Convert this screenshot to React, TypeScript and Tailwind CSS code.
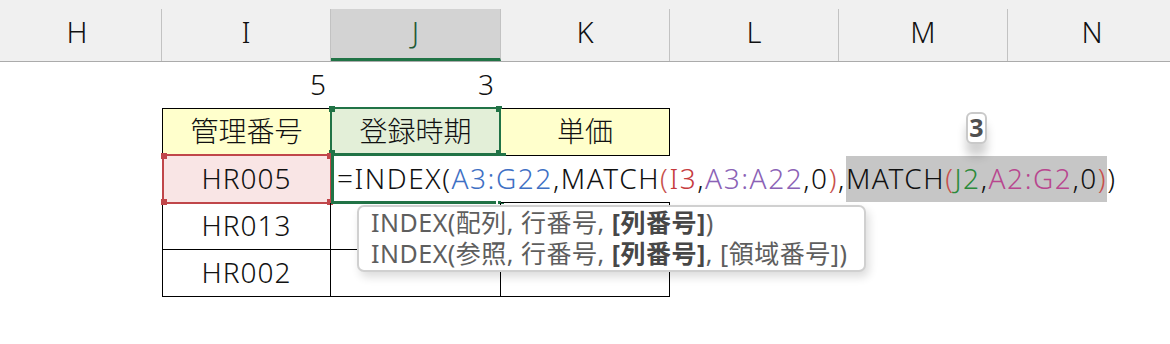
import { ReactNode } from 'react';

const headers = [
  { label: 'H', w: 'w-[169px]' },
  { label: 'I', w: 'w-[169px]' },
  { label: 'J', w: 'w-[170px]' },
  { label: 'K', w: 'w-[169px]' },
  { label: 'L', w: 'w-[169px]' },
  { label: 'M', w: 'w-[169px]' },
  { label: 'N', w: 'w-[169px]' },
];

function ColumnHeaders() {
  return (
    <div className="flex h-[62px] -ml-[7px] border-b border-[#ababab] bg-[#f0f0f0] text-[29px]">
      {headers.map(h => (
        <div key={h.label} className={`${h.w} shrink-0 h-full pt-[9px]`}>
          <div
            className={
              h.label === 'J'
                ? 'h-full flex items-center justify-center pb-[3px] border-r border-[#c2c2c2] bg-[#d3d3d3] text-[#1f5a37] border-b-[3px] border-b-[#217346]'
                : 'h-full flex items-center justify-center pb-[6px] border-r border-[#c2c2c2]'
            }
          >
            {h.label}
          </div>
        </div>
      ))}
    </div>
  );
}

function Handles({ color }: { color: string }) {
  return (
    <>
      <span className={`absolute -left-[3px] -top-[3px] w-[6px] h-[6px] ${color}`} />
      <span className={`absolute -right-[3px] -top-[3px] w-[6px] h-[6px] ${color}`} />
      <span className={`absolute -left-[3px] -bottom-[3px] w-[6px] h-[6px] ${color}`} />
      <span className={`absolute -right-[3px] -bottom-[3px] w-[6px] h-[6px] ${color}`} />
    </>
  );
}

function Cell({ children, className = '' }: { children?: ReactNode; className?: string }) {
  return (
    <div className={`relative h-[47px] pb-[3px] border-b border-black flex items-center justify-center ${className}`}>
      {children}
    </div>
  );
}

const R = 'text-[#c8504c]';

function Formula() {
  const seg = (t: string, c = '') => <span className={c}>{t}</span>;
  return (
    <div className="absolute left-[6px] top-0 h-[46px] pb-[3px] flex items-center whitespace-nowrap tracking-[1.55px] z-10">
      {seg('=INDEX(')}
      {seg('A3:G22', 'text-[#3e70c4]')}
      {seg(',MATCH')}
      {seg('(', R)}
      {seg('I3', 'text-[#c63a3e]')}
      {seg(',')}
      {seg('A3:A22', 'text-[#8b62b6]')}
      {seg(',0')}
      {seg(')', R)}
      {seg(',')}
      <span className="h-[46px] -mb-[3px] pb-[3px] flex items-center bg-[#c6c6c6]">
        {seg('MATCH')}
        {seg('(', R)}
        {seg('J2', 'text-[#2b8a3a]')}
        {seg(',')}
        {seg('A2:G2', 'text-[#b8468f]')}
        {seg(',0')}
        {seg(')', R)}
      </span>
      {seg(')')}
    </div>
  );
}

function Table() {
  return (
    <div className="ml-[162px] w-[508px] border-t border-l border-black grid grid-cols-[168px_170px_169px] text-[28px]">
      <Cell className="border-r bg-[#ffffcc]">管理番号</Cell>
      <Cell className="border-r bg-[#e3efd8]">
        登録時期
        <div className="absolute -left-px -top-[2px] -right-px bottom-0 border-2 border-[#217346]">
          <Handles color="bg-[#217346]" />
        </div>
      </Cell>
      <Cell className="border-r bg-[#ffffcc]">単価</Cell>

      <Cell className="border-r bg-[#f9e5e5] tracking-[1px]">
        HR005
        <div className="absolute -left-px -top-[2px] -right-[2px] -bottom-[2px] border-2 border-[#c0464a]">
          <Handles color="bg-[#c0464a]" />
        </div>
      </Cell>
      <Cell className="bg-white justify-start">
        <div className="absolute left-0 -top-[3px] -right-[3px] -bottom-[2px] border-l-[3px] border-t-[3px] border-b-[3px] border-[#217346]">
          <span className="absolute -right-[2px] -top-[3px] w-[5px] h-[5px] bg-[#217346]" />
          <span className="absolute right-[6px] -bottom-[3px] w-[2px] h-[3px] bg-white" />
        </div>
        <Formula />
      </Cell>
      <Cell className="bg-white" />

      <Cell className="border-r tracking-[1px]">HR013</Cell>
      <Cell className="border-r" />
      <Cell className="border-r" />

      <Cell className="border-r tracking-[1px]">HR002</Cell>
      <Cell className="border-r" />
      <Cell className="border-r" />
    </div>
  );
}

function Tooltip() {
  return (
    <div className="absolute left-[357px] top-[205px] w-[509px] h-[67px] px-[12px] rounded-[7px] border-2 border-[#d0d0d0] bg-white font-['Noto_Sans','Noto_Sans_CJK_JP',sans-serif] font-normal text-[25px] tracking-[0.5px] leading-[31px] text-[#5e5e5e] shadow-[3px_5px_10px_rgba(0,0,0,0.14)] z-20">
      <div className="whitespace-nowrap">
        INDEX(配列, 行番号, <b className="font-bold text-[#474747]">[列番号]</b>)
      </div>
      <div className="whitespace-nowrap">
        INDEX(参照, 行番号, <b className="font-bold text-[#474747]">[列番号]</b>, [領域番号])
      </div>
    </div>
  );
}

function Badge() {
  return (
    <div className="absolute left-[966px] top-[112px] w-[21px] h-[32px] rounded-[6px] border-2 border-[#c9c9c9] bg-white flex items-center justify-center font-['Noto_Sans',sans-serif] text-[25px] font-bold text-[#505050] shadow-[0_12px_10px_rgba(0,0,0,0.18)] z-20">
      3
    </div>
  );
}

export default function App() {
  return (
    <div className="relative w-[1170px] h-[344px] overflow-hidden bg-white font-['Noto_Sans','Noto_Sans_CJK_JP',sans-serif] font-light text-[#111]">
      <ColumnHeaders />
      <div className="flex h-[46px] pl-[162px] text-[28px]">
        <div className="w-[169px] flex items-center justify-end pr-[5px] pb-[2px]">5</div>
        <div className="w-[170px] flex items-center justify-end pr-[7px] pb-[2px]">3</div>
      </div>
      <Table />
      <Badge />
      <Tooltip />
    </div>
  );
}
